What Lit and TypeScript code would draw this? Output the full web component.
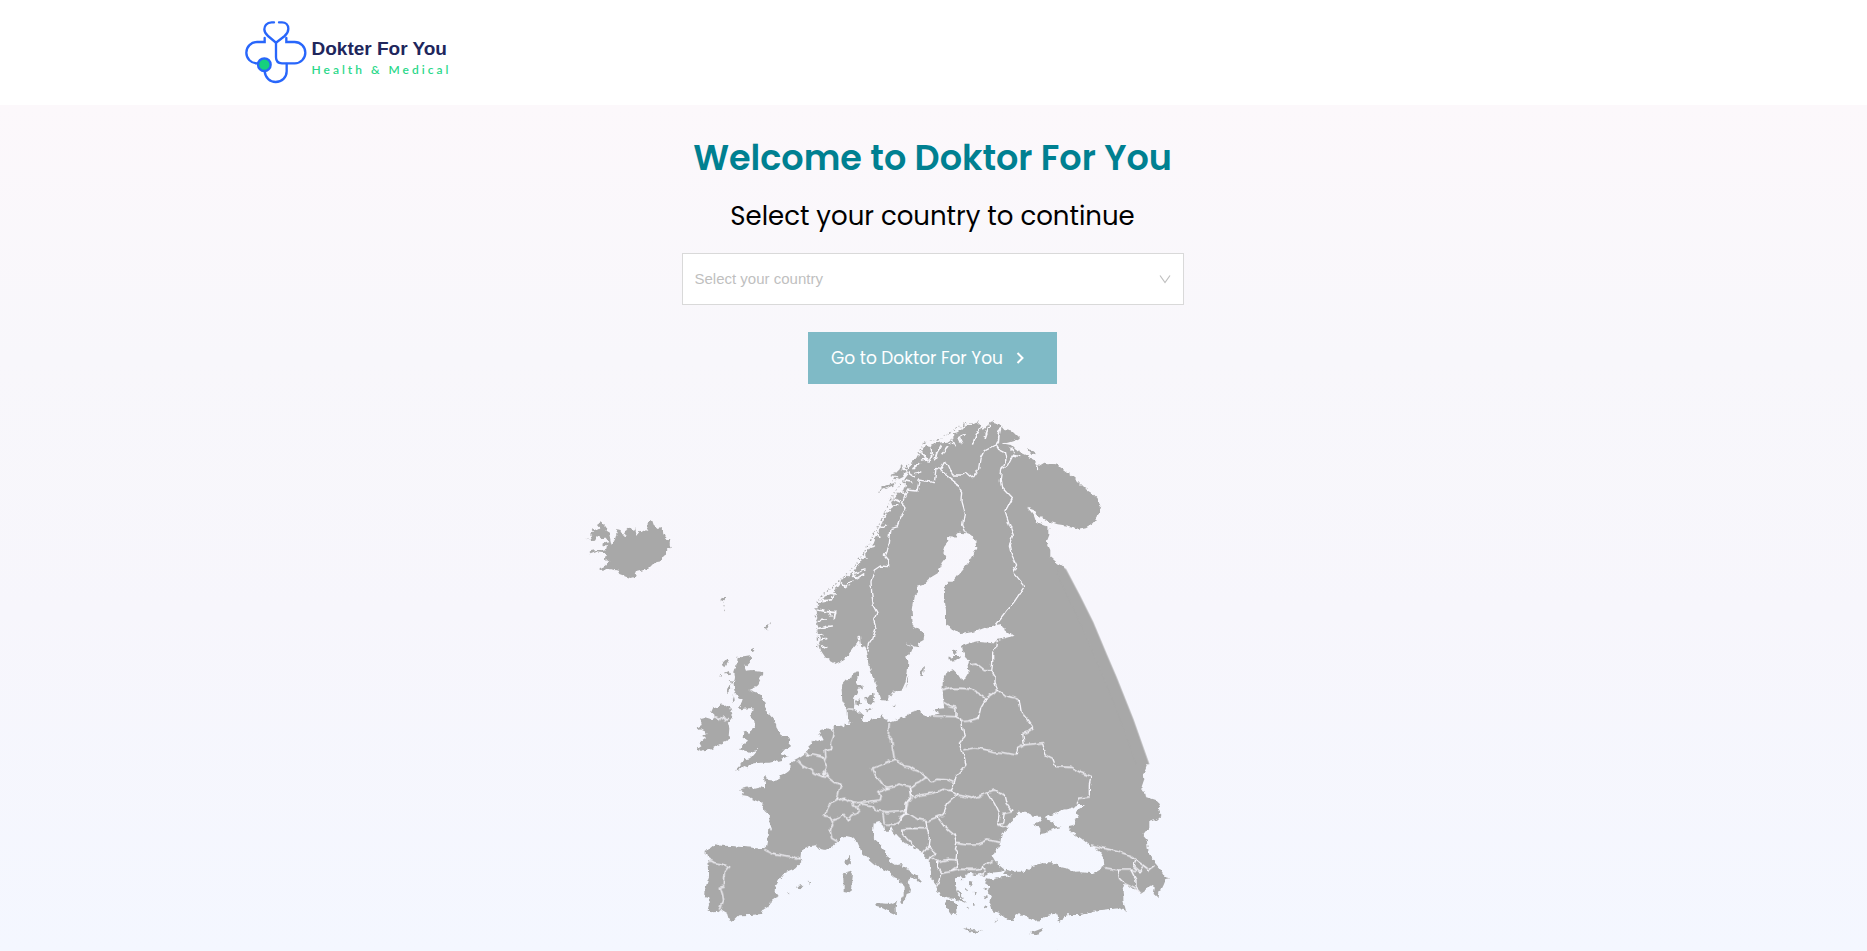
import { LitElement, html, css, svg } from "lit";
import { customElement, state } from "lit/decorators.js";

const COUNTRIES = ["Belgium", "Denmark", "Finland", "France", "Germany", "Netherlands", "Norway", "Spain", "Sweden"];

// Coastlines, grouped by region. Units are thirds of a map pixel.
const NORTH_LAND = [
  "M90,722L84,700L88,690L80,670L84,655L78,640L82,620L77,605L84,590L80,578L98,570L100,560L120,552L130,540L145,528L150,510L170,500L185,488L200,470L212,450L222,435L240,410L250,385L262,365L270,345L280,325L292,305L305,290L300,275L312,260L325,245L340,240L345,222L335,215L350,195L345,180L362,165L365,150L380,140L392,125L405,105L418,108L440,98L470,95L490,80L485,70L505,65L525,45L540,45L560,38L568,45L575,60L585,50L600,38L625,42L640,60L665,65L685,85L670,92L650,98L632,100L660,105L675,120L695,130L715,138L735,155L740,170L760,158L795,163L820,180L850,205L880,235L905,250L920,265L928,290L920,320L905,340L885,352L862,356L830,347L800,343L770,333L750,320L735,312L728,300L708,293L720,305L730,320L735,335L760,345L775,358L775,375L767,395L778,420L778,440L795,455L815,470L818,484L860,564L900,644L940,739L1020,934L1066,1066L620,1066L620,690L640,685L668,678L650,665L635,655L632,642L615,645L590,650L550,665L510,672L490,660L465,645L465,600L460,560L458,535L470,515L485,515L500,495L530,460L545,435L556,415L553,390L540,375L527,370L500,368L490,380L470,378L472,395L460,410L455,425L465,445L450,465L440,490L415,505L395,525L378,530L378,550L368,560L362,600L365,645L385,660L400,675L398,690L380,700L385,712L365,708L340,695L365,712L355,735L345,740L352,750L350,790L342,820L332,842L305,845L295,860L292,872L268,870L262,850L255,820L240,785L232,750L228,720L220,705L212,710L205,690L195,705L175,730L160,750L135,762L105,745Z",
  "M262,246L275,232L300,222L320,216L302,228L280,238Z",
  "M300,195L315,190L325,170L335,162L332,180L345,185L335,200L320,208L318,198Z",
  "M475,745L492,738L510,738L498,750L478,752Z",
  "M486,724L498,720L500,730L488,732Z",
  "M388,800L390,778L402,768L400,785L392,802Z",
  "M708,118L720,120L735,132L722,135Z",
  "M598,36L606,34L606,46L598,46Z",
];
const EAST_LAND = [
  "M470,8L450,6L415,3L385,10L362,18L368,38L378,55L384,62L380,75L383,100L372,118L360,118L348,100L335,88L318,95L305,125L305,155L308,190L310,205L280,208L285,215L300,220L275,225L262,230L245,225L243,240L243,640L265,662L268,680L270,700L272,720L285,735L290,750L298,768L320,775L345,778L358,785L374,792L364,778L350,765L345,750L350,740L340,725L342,712L355,710L362,718L375,715L372,705L385,698L400,705L420,702L428,708L440,705L450,698L480,695L492,690L480,680L462,662L455,650L465,630L478,610L482,580L500,568L505,550L520,535L535,515L555,515L572,525L570,530L600,530L605,535L595,545L575,552L598,562L598,585L612,583L630,570L645,565L665,560L640,558L632,545L620,540L612,532L640,522L665,510L690,505L715,495L732,495L720,503L705,512L715,530L700,540L698,558L680,562L690,575L720,595L745,615L775,635L788,655L790,680L770,692L750,700L725,697L700,698L675,685L655,680L650,673L635,670L600,670L575,678L548,695L520,695L495,690L490,700L515,708L480,712L460,718L435,715L430,728L445,738L440,755L450,770L445,785L452,800L455,815L480,825L500,840L515,840L525,822L550,825L578,843L600,840L620,825L645,820L650,828L655,850L665,830L685,825L720,825L760,812L800,808L835,805L855,812L848,785L845,750L850,732L870,740L890,755L900,758L920,745L935,735L942,740L938,762L952,775L955,755L965,735L972,718L988,715L972,710L960,690L945,672L930,655L920,625L918,600L905,585L925,560L925,545L945,540L962,525L952,515L958,505L945,480L915,470L912,455L900,450L910,420L908,400L914,388L918,376L870,244L820,114L772,0L518,-12L490,-2Z",
  "M308,786L320,782L338,784L352,796L345,806L348,826L338,816L332,826L320,810Z",
  "M362,864L385,867L408,872L424,873L405,878L385,873Z",
  "M568,878L585,872L606,864L600,876L585,885L572,884Z",
  "M632,932L645,931L646,936L632,936Z",
  "M384,726L396,730L392,738L384,734Z M398,758L408,760L404,766Z M430,742L440,746L432,752Z M428,768L438,770L434,778Z M395,790L402,794L398,800Z M380,800L388,804L382,808Z M430,795L440,800L432,804Z M460,848L468,838L466,846Z M372,745L380,750L374,754Z M350,752L372,772L366,774L348,758Z",
];
const WEST_LAND = [
  "M533,94L531,104L533,114L528,124L526,132L541,138L543,144L533,150L529,160L521,170L519,182L520,195L519,206L535,217L548,229L543,240L552,247L566,240L580,236L598,230L606,224L612,236L620,246L630,244L650,238L672,230L690,219L715,211L722,216L724,226L735,230L750,228L756,640L748,662L735,647L700,625L670,608L650,590L637,575L630,560L620,572L612,572L610,556L600,545L578,552L576,572L578,588L580,600L598,614L612,630L620,650L630,665L645,675L665,672L663,682L690,694L712,710L720,726L715,731L705,718L690,712L683,716L680,728L684,740L690,748L688,758L677,762L674,775L668,788L660,788L658,782L664,772L668,765L668,745L662,730L655,718L640,712L622,695L600,685L580,672L560,655L543,640L536,622L528,604L512,592L495,588L482,592L470,605L455,620L432,630L415,626L405,616L385,618L370,625L360,640L358,655L362,665L345,683L310,698L298,715L283,740L281,755L290,768L270,782L266,798L248,808L240,822L210,825L175,826L155,845L143,840L137,820L120,810L112,815L95,817L80,815L84,795L82,772L70,768L70,755L76,735L84,712L84,685L82,665L90,655L74,645L74,632L90,625L105,612L120,617L150,618L185,621L215,623L245,628L255,620L260,595L262,560L272,574L262,545L264,525L250,512L248,500L240,488L215,478L200,468L182,465L190,458L178,452L182,446L212,440L222,446L240,442L252,446L252,430L248,408L256,410L262,420L285,422L298,415L295,408L315,400L325,392L326,370L335,362L350,355L368,343L380,330L388,315L395,302L412,306L425,300L420,290L415,282L418,270L440,265L455,270L460,258L475,258L488,266L492,252L508,252L498,230L497,210L494,200L484,180L482,150L484,130L495,118L510,116L515,100L525,95Z",
  "M170,50L188,52L212,48L214,56L200,72L190,80L195,92L215,90L243,92L244,102L232,125L225,142L205,150L228,158L240,165L250,190L258,215L275,235L285,252L286,262L298,282L300,288L320,288L328,300L325,320L312,328L300,342L320,350L300,360L265,368L240,368L215,370L200,382L190,378L175,388L162,392L180,372L190,358L210,355L232,330L205,335L172,328L180,318L198,305L195,295L185,290L188,272L205,278L222,265L220,245L210,225L215,205L200,205L180,208L170,205L182,190L185,180L175,175L165,165L160,150L158,130L162,110L160,95L165,80Z",
  "M115,195L128,198L145,195L155,225L150,238L140,245L145,265L143,290L137,305L120,312L95,325L70,337L48,325L62,315L50,312L72,295L62,290L80,280L60,270L50,262L62,255L58,235L72,232L92,238L98,225L88,215L95,200L108,205Z",
  "M122,74L138,58L141,62L130,82Z M132,98L146,92L150,104L140,106Z M140,120L158,122L150,128Z M138,158L144,140L150,132L146,152Z M150,185L156,165L158,180Z M115,112L119,98L120,104Z M182,276L196,272L188,278Z M210,30L218,25L219,34L211,36Z",
  "M503,642L508,655L510,670L502,682L494,672L494,658L500,655Z",
  "M486,706L498,696L510,692L516,702L514,720L514,748L500,758L488,756L488,730Z",
  "M582,790L600,790L625,792L648,785L644,802L645,825L630,818L605,805L586,800Z",
  "M348,742L358,732L368,742L360,748Z M380,728L388,730L386,734Z M318,761L326,758L322,763Z",
  "M522,182L532,178L540,188L535,198L524,194Z M553,172L568,168L580,158L582,172L576,182L578,190L568,194L556,186Z M552,208L566,204L572,208L560,214Z M634,194L644,194L642,200Z M626,850L631,849L631,852Z",
  "M674,146L684,110L684,122Z",
];
const ICELAND = [
  "M46,118L58,120L65,112L58,105L60,98L70,98L62,90L66,85L80,92L88,85L78,72L86,66L96,72L106,82L104,95L115,102L118,118L122,138L132,118L140,88L148,90L152,105L162,108L166,90L176,82L186,90L192,82L198,108L206,98L214,92L228,95L234,82L232,66L244,62L248,74L260,84L272,82L274,100L284,105L282,116L298,118L296,132L299,144L288,150L288,162L278,168L272,184L258,186L246,192L232,206L214,212L198,216L192,230L178,234L162,228L145,222L140,212L124,208L108,208L86,210L86,204L100,200L108,190L116,182L104,184L102,174L112,170L108,162L94,156L75,154L58,160L56,154L75,150L94,150L106,146L108,136L92,136L104,126L116,124L105,112L92,116L80,108L72,122L60,124Z",
  "M448,300L454,292L466,290L458,300L462,306L454,302Z M457,312L462,314L460,320Z M457,328L462,330L460,334Z",
  "M588,374L592,382L588,392L583,382Z M596,366L600,364L597,374Z M540,448L548,444L550,452L542,456Z M445,616L450,610L452,616Z",
];

const NORTH_LINES =
  "M232,725L235,700L245,685L255,655L248,630L258,608L248,590L242,550L240,515L250,480L268,468L290,470L290,450L280,438L295,400L300,355L318,350L330,320L345,295L335,275L350,240L378,243L385,210L430,218L435,172L450,175L460,157L472,165L485,195L515,195L525,188L545,205L562,180L568,145L580,122L612,105L620,118L640,128L645,150L632,180L628,210L632,232L663,265L642,305L655,345L667,375L655,405L660,430L677,465L665,487L700,530L670,575L615,645M448,177L470,200L495,218L512,245L510,275L520,310L515,345L527,372M632,180L650,165L665,135L685,140M612,105L622,98";
const EAST_LINES =
  "M250,412L275,425L290,418L320,420L340,428L330,452L305,448L275,460L240,465L220,473L208,460L205,440M340,428L345,410L375,375L370,350L365,335L355,310L370,290L365,265L362,240L345,230L275,228M345,230L345,205L325,200L308,190M305,152L330,145L360,145L395,148L415,160L435,175L420,200L412,235L385,243L362,245M385,75L405,72L430,92L452,92M470,0L468,15L455,40L455,70L452,92L462,110L462,130L470,150L435,175M470,150L490,165L515,172L535,180L540,215L560,240L578,265L565,275L545,280L550,315L530,325L525,345L490,338L460,335L430,328L400,323L370,330M550,315L575,312L605,308L615,345L635,355L645,380L690,382L720,398L750,410L745,435L745,470L715,475L708,495M330,452L348,465L395,475L425,465L440,457L460,450L490,468L495,490L513,515L490,520L485,550L472,555M440,457L460,490L475,520L470,550L485,562L505,558M208,473L195,490L195,515L230,538L260,542L305,525L320,490L348,465M180,568L215,565L258,567L265,590L262,620L245,640L225,625L195,590L180,568M255,542L258,567M195,515L180,535L170,553M290,532L310,560L340,585L345,607L380,612L410,612L440,600L478,607M345,607L340,625L347,640L345,660M290,665L320,658L345,660L348,682L330,695L300,700L290,685L290,665M262,620L285,640L268,650L262,662M268,650L290,665M300,700L292,725L285,738M330,695L360,688L400,688L422,685L425,675L455,662M422,680L435,690L425,705M750,615L790,625L830,635L870,650L905,675L925,690L945,675M790,683L830,690L870,690L885,720L885,740L900,758M832,690L835,715L850,730L880,745L895,758M885,660L878,680L895,695L905,680M870,690L885,692";
const WEST_LINES =
  "M84,665L90,662L100,668L125,672L143,680L130,695L128,715L127,738L115,742L122,765L125,785L118,800L115,812M250,628L275,640L300,645L330,650L345,657L358,655M348,360L365,378L385,388L400,400L425,410L440,412L460,428L480,433L475,450L468,480M372,345L395,345L410,348L425,352L430,365L438,380L432,398L440,412M457,268L455,290L448,308L450,325L432,330L435,350L430,362M430,398L425,410M468,480L450,490L440,508L430,528L445,530L450,540L475,530L485,522L500,540L512,525L525,522L535,510L525,500L515,498L512,485L495,475L468,480M450,540L455,555L448,570L452,595L470,605M512,485L530,488L560,485L595,480L598,465L590,458L620,445M530,500L545,492L575,498L585,515L620,518L655,515L675,510L680,490L690,475L685,440L650,432L640,440L620,445L600,430L585,410L575,385L600,375L630,362L640,358L655,365L670,378L685,380L700,390L715,395L732,412L715,425L700,432L688,440M625,250L622,280L632,300L635,330L640,358M605,520L608,535L610,552L640,553L655,545L658,530L678,520L672,512M497,207L518,208M98,230L108,232L115,240L125,228L132,240L142,238M370,335L385,345M405,285L415,298";
const FJORDS =
  "M545,102L556,74L570,48M583,82L590,62L596,46M622,98L624,75L630,50M512,100L504,82L522,74M478,100L492,106L484,88M430,152L438,128L452,104M412,156L424,132L420,112M392,150L410,145M366,176L386,158M350,188L368,200M310,268L328,276M300,290L322,286M268,352L286,345M252,375L268,380M235,412L250,408M215,440L228,444M190,490L222,480M186,486L196,506L218,492M150,518L162,530L185,515M120,550L136,552M98,572L118,570L128,556M80,600L100,604L134,608M115,606L120,618M134,604L130,625M84,632L104,630M86,655L106,650L124,648M84,672L98,676M90,690L104,686M92,705L104,712M735,158L742,178M700,128L722,142M655,112L672,128M740,330L752,322M205,680L206,705M372,190L392,186M395,128L408,150M455,130L470,112M340,212L362,216M322,232L340,250";
const SKERRIES =
  "M80,712L78,650L75,600L80,570L106,546L136,520L163,495L198,460L224,420L250,370L278,318L302,262L342,204M298,222L333,182L374,146L400,97L440,90L482,64L520,42L565,36";

@customElement("app-root")
export class AppRoot extends LitElement {
  static styles = css`
    :host {
      display: block;
      min-height: 100vh;
      font-family: Poppins, Inter, sans-serif;
      color: #000;
    }
    .page {
      display: flex;
      flex-direction: column;
      min-height: 100vh;
    }
    .header {
      background: #fff;
    }
    .container {
      box-sizing: border-box;
      max-width: 1402px;
      margin: 0 auto;
      padding: 20px 12px;
    }
    .logo {
      display: inline-flex;
      align-items: flex-start;
      gap: 5px;
      height: 65px;
      text-decoration: none;
      vertical-align: top;
    }
    .mark {
      width: 62px;
      height: 64px;
    }
    .brand {
      display: flex;
      flex-direction: column;
      padding-top: 18px;
    }
    .name {
      font: bold 19px/22px "Liberation Sans", Arial, sans-serif;
      color: #20265c;
    }
    .tagline {
      font: 600 12px/20px Lato, sans-serif;
      letter-spacing: 3px;
      color: #2bd88a;
    }
    .main {
      flex: 1;
      display: flex;
      flex-direction: column;
      align-items: center;
      padding: 28px 2px 0 0;
      background: linear-gradient(#fcf8fb, #f8f7fb 30%, #f7f6fc 60%, #f4f7ff);
    }
    .title {
      margin: 0;
      font-size: 35px;
      line-height: 50px;
      font-weight: 600;
      color: #008091;
      text-align: center;
    }
    .form {
      display: flex;
      flex-direction: column;
      align-items: center;
      width: 100%;
    }
    .prompt {
      margin: 12px 0 16px;
      font-size: 26px;
      line-height: 42px;
      text-align: center;
    }
    .picker {
      display: grid;
      width: 100%;
      max-width: 502px;
      align-items: center;
    }
    .picker > * {
      grid-area: 1 / 1;
    }
    .select {
      appearance: none;
      box-sizing: border-box;
      width: 100%;
      height: 52px;
      padding: 0 36px 2px 12px;
      border: 1px solid #d9d9d9;
      border-radius: 0;
      background: #fff;
      color: #bfbfbf;
      font: 15px "Liberation Sans", Arial, sans-serif;
    }
    .caret {
      justify-self: end;
      width: 12px;
      height: 12px;
      margin-right: 13px;
      pointer-events: none;
    }
    .go {
      display: flex;
      align-items: center;
      gap: 12px;
      height: 52px;
      margin: 27px 0 0;
      padding: 0 31px 0 23px;
      border: 0;
      background: #7fbac6;
      color: #fff;
      font: 17px/24px Poppins, Inter, sans-serif;
    }
    .chevron {
      width: 11px;
      height: 14px;
    }
    .map {
      display: block;
      width: 707px;
      max-width: 100%;
      margin-top: 29px;
    }
    .land {
      fill: #a8a8a8;
    }
    .lines {
      fill: none;
      stroke: #f7f6fc;
      stroke-width: 4;
      stroke-linejoin: round;
    }
    .fjords {
      fill: none;
      stroke: #f8f7fc;
      stroke-width: 5;
      stroke-linecap: round;
    }
    .skerries {
      fill: none;
      stroke: #a8a8a8;
      stroke-width: 4;
      stroke-dasharray: 5 6 2 7 8 5 3 9;
    }
  `;

  @state() private country = "";

  private pick(e: Event) {
    this.country = (e.target as HTMLSelectElement).value;
  }

  private land(paths: string[]) {
    return paths.map((d) => svg`<path class="land" d=${d} />`);
  }

  private renderLogo() {
    return html`<svg class="mark" viewBox="45 60 186 192" aria-hidden="true">
      <g fill="none" stroke="#2866fb" stroke-width="7" stroke-linecap="round">
        <path d="M132 67H125C109 67 103 79 103 88C103 97 107 102 114 108L138 128L164 108C172 101 175 95 175 86C175 75 167 67 156 67H147" />
        <path d="M104 114V126H81A32 32 0 0 0 81 190H86" />
        <path d="M169 114V126H194A32 32 0 0 1 194 190H156C145 190 138 183 138 172V128" />
        <path d="M104 214C106 234 120 246 137 246C156 246 170 232 170 214V192" />
        <circle cx="103" cy="194" r="19" fill="#16d07e" />
      </g>
    </svg>`;
  }

  private renderMap() {
    return html`<svg class="map" viewBox="579 414 707 537" role="img" aria-label="Map of Europe">
      <defs>
        <filter id="coast" x="-2%" y="-2%" width="104%" height="104%" color-interpolation-filters="sRGB">
          <feTurbulence type="fractalNoise" baseFrequency="0.2" numOctaves="2" seed="4" result="n" />
          <feDisplacementMap in="SourceGraphic" in2="n" scale="5" xChannelSelector="R" yChannelSelector="G" />
        </filter>
        <filter id="border" x="-2%" y="-2%" width="104%" height="104%" color-interpolation-filters="sRGB">
          <feTurbulence type="fractalNoise" baseFrequency="0.12" numOctaves="2" seed="9" result="n" />
          <feDisplacementMap in="SourceGraphic" in2="n" scale="5" xChannelSelector="R" yChannelSelector="G" />
        </filter>
      </defs>
      <g filter="url(#coast)" transform="translate(1 1)">
        <g transform="translate(570 500) scale(.3333)">${this.land(ICELAND)}</g>
        <g transform="translate(680 640) scale(.3333)">${this.land(WEST_LAND)}</g>
        <g transform="translate(840 640) scale(.3333)">${this.land(EAST_LAND)}</g>
        <g transform="translate(790 410) scale(.3333)">
          ${this.land(NORTH_LAND)}
          <path class="skerries" d=${SKERRIES} />
          <path class="fjords" d=${FJORDS} />
        </g>
      </g>
      <g transform="translate(790 410) scale(.3333)">
        <path class="land" d="M815,472L828,480L870,560L910,640L950,735L980,805L1030,930L1078,1066L1040,1066L980,900L880,660L800,490Z" />
      </g>
      <g filter="url(#border)" transform="translate(1 1)">
        <g transform="translate(790 410) scale(.3333)"><path class="lines" d=${NORTH_LINES} /></g>
        <g transform="translate(680 640) scale(.3333)"><path class="lines" d=${WEST_LINES} /></g>
        <g transform="translate(840 640) scale(.3333)"><path class="lines" d=${EAST_LINES} /></g>
      </g>
    </svg>`;
  }

  render() {
    return html`<div class="page">
      <header class="header">
        <div class="container">
          <a class="logo" href="#" aria-label="Dokter For You">
            ${this.renderLogo()}
            <span class="brand">
              <span class="name">Dokter For You</span>
              <span class="tagline">Health &amp; Medical</span>
            </span>
          </a>
        </div>
      </header>
      <main class="main">
        <h1 class="title">Welcome to Doktor For You</h1>
        <form class="form" @submit=${(e: Event) => e.preventDefault()}>
          <label class="prompt" for="country">Select your country to continue</label>
          <div class="picker">
            <select class="select" id="country" .value=${this.country} @change=${this.pick}>
              <option value="">Select your country</option>
              ${COUNTRIES.map((c) => html`<option value=${c}>${c}</option>`)}
            </select>
            <svg class="caret" viewBox="0 0 12 12" aria-hidden="true">
              <path d="M1 2.5L6 9.5L11 2.5" fill="none" stroke="#bfbfbf" stroke-width="1.2" />
            </svg>
          </div>
          <button class="go" type="submit">
            Go to Doktor For You
            <svg class="chevron" viewBox="0 0 11 14" aria-hidden="true">
              <path d="M2.5 2L7.5 7L2.5 12" fill="none" stroke="#fff" stroke-width="2" />
            </svg>
          </button>
        </form>
        ${this.renderMap()}
      </main>
    </div>`;
  }
}
